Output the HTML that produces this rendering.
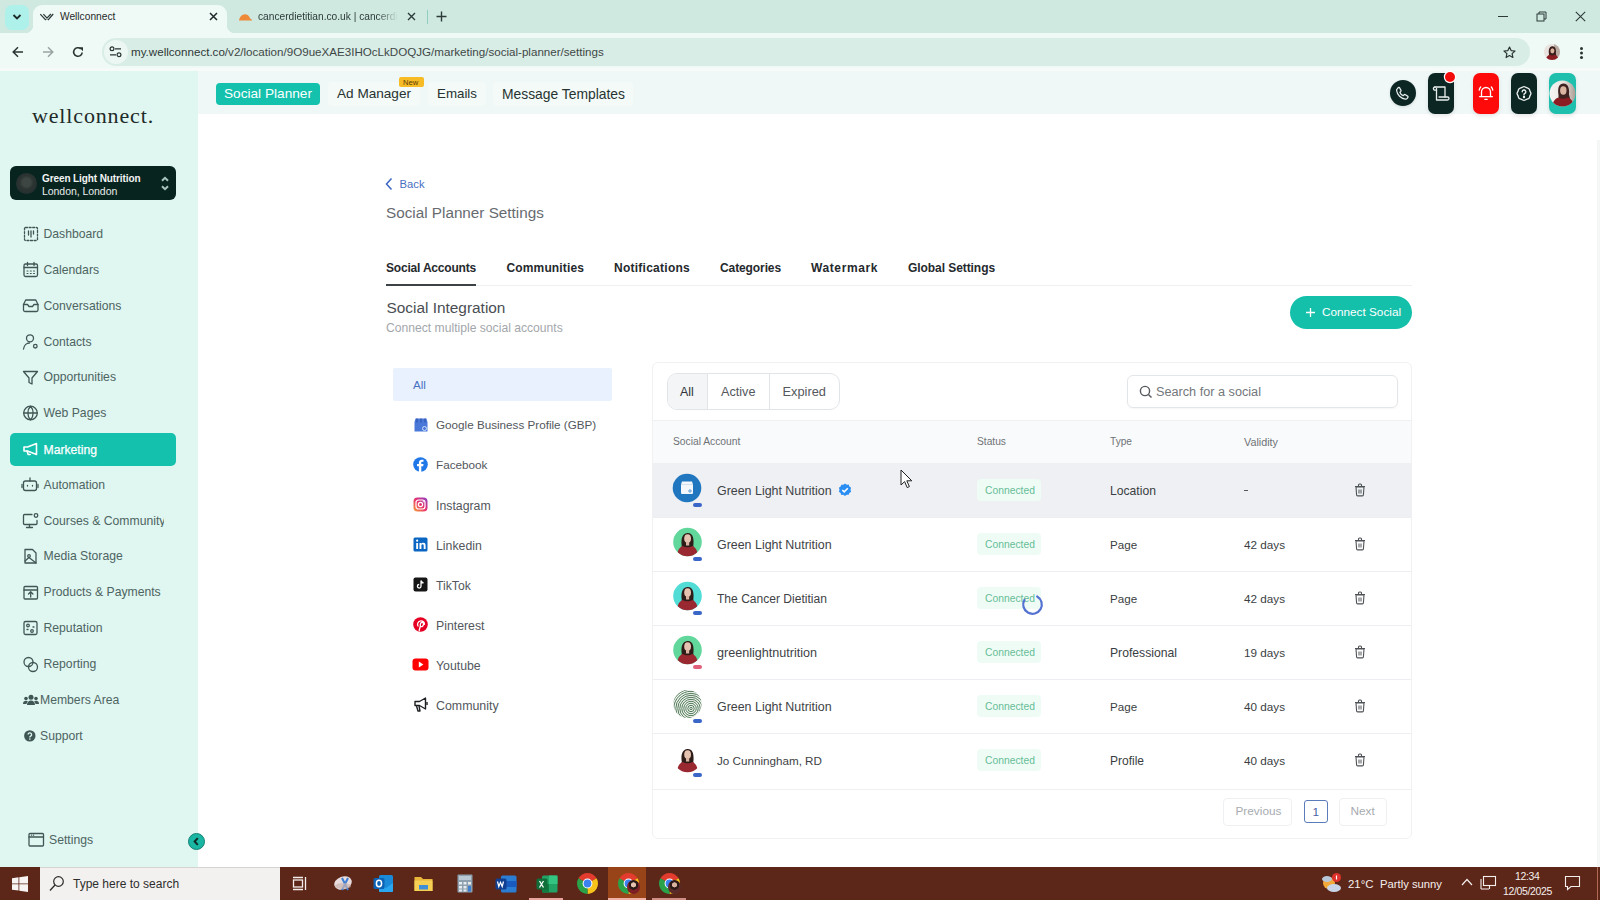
<!DOCTYPE html>
<html><head><meta charset="utf-8">
<style>
*{box-sizing:border-box;margin:0;padding:0}
html,body{width:1600px;height:900px;overflow:hidden;background:#fff;font-family:"Liberation Sans",sans-serif;position:relative}
.a{position:absolute}
.t{position:absolute;white-space:nowrap;line-height:1}
svg{display:block}
</style></head><body>
<!-- ===== browser chrome ===== -->
<div class="a" style="left:0;top:0;width:1600px;height:33px;background:#cfe9e1"></div>
<!-- active tab -->
<div class="a" style="left:33px;top:5px;width:194px;height:30px;border-radius:9px 9px 0 0;background:#eff9f6"></div>
<div class="a" style="left:25px;top:25px;width:8px;height:8px;background:radial-gradient(circle at 0 0,#cfe9e1 8px,#eff9f6 8.5px)"></div>
<div class="a" style="left:227px;top:25px;width:8px;height:8px;background:radial-gradient(circle at 100% 0,#cfe9e1 8px,#eff9f6 8.5px)"></div>
<div class="a" style="left:5px;top:5px;width:24px;height:25px;border-radius:7px;background:#aef0ea"></div>
<svg class="a" style="left:12px;top:13px" width="10" height="8" viewBox="0 0 10 8"><path d="M1.5 2l3.5 3.5L8.5 2" fill="none" stroke="#1d2a2a" stroke-width="1.8"/></svg>
<svg class="a" style="left:40px;top:13px" width="14" height="8" viewBox="0 0 14 8"><path d="M0.3 1.2L5.4 6.6L10.9 1M3.4 1.2L8.4 6.6L13.2 1" fill="none" stroke="#2b3b38" stroke-width="1.25"/></svg>
<div class="t" style="left:60px;top:12px;font-size:10.2px;color:#1f2a28">Wellconnect</div>
<svg class="a" style="left:209px;top:12px" width="9" height="9" viewBox="0 0 9 9"><path d="M1 1l7 7M8 1L1 8" stroke="#1f2a28" stroke-width="1.5"/></svg>
<!-- second tab -->
<svg class="a" style="left:238px;top:13px" width="15" height="8" viewBox="0 0 15 8"><path d="M1 7.5C1.5 4 4 1 7.5 1.2C10 1.4 11.5 3.5 12 5.5C13 5.5 14 6.5 14 7.5Z" fill="#ee8a3a"/></svg>
<div class="t" style="left:258px;top:12px;font-size:10.2px;color:#2d3b38;width:140px;overflow:hidden;-webkit-mask-image:linear-gradient(90deg,#000 85%,transparent)">cancerdietitian.co.uk | cancerdietitian</div>
<svg class="a" style="left:407px;top:12px" width="9" height="9" viewBox="0 0 9 9"><path d="M1 1l7 7M8 1L1 8" stroke="#2d3b38" stroke-width="1.4"/></svg>
<div class="a" style="left:427px;top:10px;width:1px;height:14px;background:#8fcfc2"></div>
<svg class="a" style="left:436px;top:11px" width="11" height="11" viewBox="0 0 11 11"><path d="M5.5 0.5v10M0.5 5.5h10" stroke="#2d3b38" stroke-width="1.4"/></svg>
<!-- window controls -->
<div class="a" style="left:1498px;top:16px;width:10px;height:1px;background:#2d3b38"></div>
<svg class="a" style="left:1536px;top:11px" width="11" height="11" viewBox="0 0 11 11"><rect x="1" y="3" width="7" height="7" fill="none" stroke="#2d3b38" stroke-width="1"/><path d="M3 3V1h7v7H8" fill="none" stroke="#2d3b38" stroke-width="1"/></svg>
<svg class="a" style="left:1575px;top:11px" width="11" height="11" viewBox="0 0 11 11"><path d="M0.8 0.8l9.4 9.4M10.2 0.8L0.8 10.2" stroke="#2d3b38" stroke-width="1.1"/></svg>
<!-- toolbar -->
<div class="a" style="left:0;top:33px;width:1600px;height:38px;background:#eff9f6"></div>
<div class="a" style="left:0;top:67.5px;width:1600px;height:3.5px;background:#f6fbfa"></div>
<svg class="a" style="left:12px;top:46px" width="12" height="12" viewBox="0 0 12 12"><path d="M11 6H1.5M6 1.2L1.2 6L6 10.8" fill="none" stroke="#2a3533" stroke-width="1.5"/></svg>
<svg class="a" style="left:42px;top:46px" width="12" height="12" viewBox="0 0 12 12"><path d="M1 6h9.5M6 1.2L10.8 6L6 10.8" fill="none" stroke="#9aa5a3" stroke-width="1.5"/></svg>
<svg class="a" style="left:72px;top:46px" width="12" height="12" viewBox="0 0 12 12"><path d="M10.2 6.5A4.3 4.3 0 1 1 8.8 2.8" fill="none" stroke="#2a3533" stroke-width="1.6"/><path d="M7 1.2h4v4z" fill="#2a3533"/></svg>
<div class="a" style="left:102px;top:38px;width:1428px;height:28px;border-radius:14px;background:#d9ede7"></div>
<div class="a" style="left:104px;top:40px;width:24px;height:24px;border-radius:12px;background:#ecf7f4"></div>
<svg class="a" style="left:109px;top:46px" width="13" height="12" viewBox="0 0 13 12"><circle cx="3" cy="2.8" r="1.9" fill="none" stroke="#2a3533" stroke-width="1.2"/><path d="M6 2.8h6M1 8.8h6" stroke="#2a3533" stroke-width="1.3"/><circle cx="10" cy="8.8" r="1.9" fill="none" stroke="#2a3533" stroke-width="1.2"/></svg>
<div class="t" style="left:131px;top:46px;font-size:11.6px;color:#2e3836">my.wellconnect.co<span style="color:#3e4846">/v2/location/9O9ueXAE3IHOcLkDOQJG/marketing/social-planner/settings</span></div>
<svg class="a" style="left:1503px;top:46px" width="13" height="13" viewBox="0 0 13 13"><path d="M6.5 1L8.1 4.6L12 5L9.1 7.6L9.9 11.5L6.5 9.5L3.1 11.5L3.9 7.6L1 5L4.9 4.6Z" fill="none" stroke="#2a3533" stroke-width="1.2" stroke-linejoin="round"/></svg>
<svg class="a" style="left:1544px;top:44px" width="16" height="16" viewBox="0 0 16 16"><defs><clipPath id="pav"><circle cx="8" cy="8" r="8"/></clipPath></defs><g clip-path="url(#pav)"><rect width="16" height="16" fill="#e9e2de"/><rect x="10" width="6" height="16" fill="#b9aaa2"/><path d="M5 10c-.6-3.5-.2-7.5 3.3-7.8c3.5-.2 4 3.8 3.6 7.8l.8 3h-8z" fill="#3a1f1c"/><ellipse cx="8.4" cy="6.8" rx="2" ry="2.6" fill="#dab39f"/><path d="M1.5 17c.3-3.5 2-5.5 4-6.2c.9.5 1.6.7 2.7.7s1.8-.2 2.7-.7c2 .7 3.7 2.7 4 6.2z" fill="#8a1c22"/></g></svg>
<div class="a" style="left:1580px;top:47px;width:3px;height:3px;border-radius:50%;background:#2a3533;box-shadow:0 4.5px 0 #2a3533,0 9px 0 #2a3533"></div>

<!-- ===== sidebar ===== -->
<div class="a" style="left:0;top:71px;width:198px;height:796px;background:#e0f6f1"></div>
<div class="t" style="left:32px;top:105.3px;font-family:'Liberation Serif',serif;font-size:22px;letter-spacing:0.85px;color:#1f2b28">wellconnect.</div>
<div class="a" style="left:10px;top:166px;width:166px;height:34px;border-radius:6px;background:#07241f"></div>
<div class="a" style="left:16px;top:173px;width:21px;height:21px;border-radius:50%;background:radial-gradient(circle at 50% 45%,#3e4644 0 4px,#2c3432 7px,#263030 10.5px)"></div>
<div class="t" style="left:42px;top:174px;font-size:10px;font-weight:bold;color:#f2f5f4;letter-spacing:-0.1px">Green Light Nutrition</div>
<div class="t" style="left:42px;top:185.6px;font-size:10.5px;color:#e8eceb;letter-spacing:-0.05px">London, London</div>
<svg class="a" style="left:160px;top:175px" width="10" height="16" viewBox="0 0 10 16"><path d="M2 5.8L5 2.8L8 5.8M2 11.2L5 14.2L8 11.2" fill="none" stroke="#aac4c0" stroke-width="2"/></svg>
<!-- nav -->
<div class="a" style="left:10px;top:433px;width:166px;height:33px;border-radius:5px;background:#13c1ad"></div>
<div id="nav" style="color:#4d6461;font-size:12.2px">
<div class="t" style="left:43.5px;top:228px">Dashboard</div>
<div class="t" style="left:43.5px;top:264px">Calendars</div>
<div class="t" style="left:43.5px;top:300px">Conversations</div>
<div class="t" style="left:43.5px;top:336px">Contacts</div>
<div class="t" style="left:43.5px;top:371px">Opportunities</div>
<div class="t" style="left:43.5px;top:407px">Web Pages</div>
<div class="t" style="left:43.5px;top:443.6px;color:#fff;-webkit-text-stroke:0.25px #fff">Marketing</div>
<div class="t" style="left:43.5px;top:479px">Automation</div>
<div class="t" style="left:43.5px;top:515px;width:120px;overflow:hidden">Courses &amp; Community</div>
<div class="t" style="left:43.5px;top:550px">Media Storage</div>
<div class="t" style="left:43.5px;top:586px">Products &amp; Payments</div>
<div class="t" style="left:43.5px;top:622px">Reputation</div>
<div class="t" style="left:43.5px;top:658px">Reporting</div>
<div class="t" style="left:40px;top:694px">Members Area</div>
<div class="t" style="left:40px;top:730px">Support</div>
<div class="t" style="left:49px;top:834px">Settings</div>
</div>
<svg class="a" style="left:0;top:0" width="198" height="867" viewBox="0 0 198 867" fill="none" stroke="#3f5754" stroke-width="1.3" stroke-linecap="round" stroke-linejoin="round">
 <!-- dashboard dashed square -->
 <rect x="24.5" y="227.5" width="13" height="13" rx="1" stroke-dasharray="2 1.6"/>
 <path d="M28.5 231v4M31 231v6M33.5 231v3"/>
 <!-- calendar -->
 <rect x="24" y="264" width="13.5" height="12.5" rx="1.5"/><path d="M24 267.5h13.5M27.5 262.5v3M34 262.5v3"/>
 <path d="M27 271h1M30.3 271h1M33.5 271h1M27 273.5h1M30.3 273.5h1M33.5 273.5h1" stroke-width="1.1"/>
 <!-- conversations inbox -->
 <path d="M23.5 304.5l2.2-4.5h10.1l2.2 4.5v5.5a1.5 1.5 0 0 1-1.5 1.5H25a1.5 1.5 0 0 1-1.5-1.5z"/><path d="M23.5 304.5h4l1.5 2h3.5l1.5-2h4"/>
 <!-- contacts -->
 <circle cx="30" cy="338.3" r="3.5"/><path d="M23.5 349c0.5-3.5 3-6 6-6"/><circle cx="35.3" cy="346.2" r="1.8"/>
 <!-- opportunities funnel -->
 <path d="M23.5 371.5h14l-5.5 6.5v6l-3 -1.5v-4.5z"/>
 <!-- web pages globe -->
 <circle cx="30.5" cy="413" r="6.8"/><path d="M23.7 413h13.6M30.5 406.2c-3.5 3.5-3.5 10 0 13.6M30.5 406.2c3.5 3.5 3.5 10 0 13.6"/>
 <!-- marketing megaphone -->
 <path d="M24 447v4h3.5l9 3.5v-11l-9 3.5z" stroke="#fff" stroke-width="1.6"/><path d="M27 451l1.2 3.5h2" stroke="#fff" stroke-width="1.6"/>
 <!-- automation robot -->
 <rect x="23.5" y="481" width="13" height="9.5" rx="2"/><path d="M30 478v3M27.5 485.5v0.5M32.5 485.5v0.5M22 484.5v3M38 484.5v3"/>
 <!-- courses monitor -->
 <path d="M32 514.5h-7.5a1 1 0 0 0-1 1v8a1 1 0 0 0 1 1h11.5a1 1 0 0 0 1-1v-3"/><path d="M29.5 524.5v3M26.5 527.5h6"/><circle cx="36" cy="515.5" r="1.8"/>
 <!-- media storage -->
 <path d="M25 549.5h7.5l3.5 3.5v10h-11z"/><circle cx="29" cy="556" r="1.3"/><path d="M25 561l4-3.5l7 5.5"/>
 <!-- products -->
 <rect x="24" y="586.5" width="13.5" height="12.5" rx="1"/><path d="M24 590h13.5M30.7 597v-5M28.5 594l2.2-2.2l2.2 2.2"/>
 <!-- reputation -->
 <rect x="24" y="621.5" width="13" height="13" rx="1.5"/><circle cx="28" cy="625.5" r="1.3"/><circle cx="32" cy="631" r="1.3"/><path d="M27 629.5h1M33 627h1"/>
 <!-- reporting -->
 <circle cx="28.5" cy="662" r="4.5"/><circle cx="33" cy="667" r="4.5"/>
 <!-- settings bottom -->
 <rect x="29" y="833.5" width="14.5" height="12.5" rx="1"/><path d="M29 837h14.5M31.5 835.2h0.1M33.5 835.2h0.1"/>
</svg>
<!-- members area (filled people) -->
<svg class="a" style="left:23px;top:694px" width="16" height="12" viewBox="0 0 16 12"><circle cx="8" cy="3.2" r="2.5" fill="#3f5754"/><path d="M4 11c0-2.8 1.8-4.5 4-4.5s4 1.7 4 4.5z" fill="#3f5754"/><circle cx="3" cy="4.5" r="1.8" fill="#3f5754"/><circle cx="13" cy="4.5" r="1.8" fill="#3f5754"/><path d="M0 10c0-2 1.2-3.2 3-3.2c0.8 0 1.4.2 1.9.6c-.9.9-1.3 1.6-1.4 2.6z M16 10c0-2-1.2-3.2-3-3.2c-.8 0-1.4.2-1.9.6c.9.9 1.3 1.6 1.4 2.6z" fill="#3f5754"/></svg>
<svg class="a" style="left:23.5px;top:729.5px" width="12" height="12" viewBox="0 0 12 12"><circle cx="5.8" cy="5.9" r="5.7" fill="#3f5754"/><path d="M4.1 4.6a1.75 1.75 0 1 1 2.6 1.5c-.55.3-.85.6-.85 1.2v.3" fill="none" stroke="#e0f6f1" stroke-width="1.35"/><circle cx="5.85" cy="9.1" r=".8" fill="#e0f6f1"/></svg>
<!-- collapse button -->
<div class="a" style="left:188px;top:833px;width:17px;height:17px;border-radius:50%;background:#19b6a3;border:1px solid #127f72"></div>
<svg class="a" style="left:192px;top:837px" width="9" height="9" viewBox="0 0 9 9"><path d="M5.8 1.2L2.6 4.5l3.2 3.3" fill="none" stroke="#0e2624" stroke-width="1.9"/></svg>

<!-- ===== app header ===== -->
<div class="a" style="left:198px;top:71px;width:1402px;height:43px;background:#eff8f6"></div>
<div class="a" style="left:216px;top:83px;width:104px;height:22px;border-radius:4px;background:#13c1ad"></div>
<div class="t" style="left:224px;top:87px;font-size:13.65px;color:#fff">Social Planner</div>
<div class="a" style="left:328px;top:82px;width:92px;height:24px;border-radius:4px;background:#f3faf8"></div>
<div class="a" style="left:428px;top:82px;width:58px;height:24px;border-radius:4px;background:#f3faf8"></div>
<div class="a" style="left:493px;top:82px;width:140px;height:24px;border-radius:4px;background:#f3faf8"></div>
<div class="t" style="left:337px;top:87px;font-size:13.58px;color:#273331">Ad Manager</div>
<div class="a" style="left:399px;top:77px;width:25px;height:10px;border-radius:2px;background:#f7bb26"></div>
<div class="t" style="left:403px;top:78.5px;font-size:7.6px;color:#5a3d05">New</div>
<div class="t" style="left:437px;top:87px;font-size:13.33px;color:#273331">Emails</div>
<div class="t" style="left:502px;top:88px;font-size:13.86px;color:#273331">Message Templates</div>
<!-- right icons -->
<div class="a" style="left:1389.5px;top:80px;width:26px;height:26px;border-radius:50%;background:#0c2624;box-shadow:0 1px 3px rgba(0,0,0,.12)"></div>
<svg class="a" style="left:1395px;top:86px" width="15" height="15" viewBox="0 0 15 15"><path d="M3.3 1.6c.5-.3 1-.2 1.3.3l1.3 2.2c.3.5.2 1-.2 1.4l-.8.7c.5 1.5 1.8 2.9 3.3 3.5l.8-.8c.4-.4.9-.5 1.4-.2l2.2 1.4c.5.3.6.9.3 1.3l-.7 1c-.4.6-1.1.9-1.8.8C5.9 12.6 2.2 8.9 1.6 4.5c-.1-.7.2-1.4.8-1.8z" fill="none" stroke="#e6edec" stroke-width="1.25" stroke-linejoin="round"/></svg>
<div class="a" style="left:1428px;top:73px;width:26px;height:41px;border-radius:7px;background:#0c2624;box-shadow:0 2px 4px rgba(0,0,0,.10)"></div>
<svg class="a" style="left:1431px;top:85px" width="20" height="18" viewBox="0 0 20 18" fill="none" stroke="#e8eeed" stroke-width="1.3" stroke-linejoin="round" stroke-linecap="round"><path d="M4 2h10v10"/><path d="M4 2a1.6 1.6 0 0 0-1.6 1.6c0 .9.7 1.6 1.6 1.6h1.5"/><path d="M5.5 3.5V15h11a1.5 1.5 0 0 0 0-3H8"/></svg>
<div class="a" style="left:1444.5px;top:71.8px;width:10.5px;height:10.5px;border-radius:50%;background:#f20c0c;box-shadow:0 0 0 1.2px #fff"></div>
<div class="a" style="left:1473px;top:73px;width:26px;height:41px;border-radius:7px;background:#fe0a0a;box-shadow:0 2px 4px rgba(0,0,0,.10)"></div>
<svg class="a" style="left:1477px;top:84px" width="18" height="18" viewBox="0 0 18 18" fill="none" stroke="#fff" stroke-width="1.3" stroke-linecap="round" stroke-linejoin="round"><path d="M4.5 12.5V8a4.5 4.5 0 0 1 9 0v4.5"/><path d="M2.6 12.6h12.8"/><path d="M7.8 15.3h2.4"/><path d="M2.2 6.2c.2-1.3.7-2.4 1.5-3.2M15.8 6.2c-.2-1.3-.7-2.4-1.5-3.2"/></svg>
<div class="a" style="left:1511px;top:73px;width:26px;height:41px;border-radius:7px;background:#0c2624;box-shadow:0 2px 4px rgba(0,0,0,.10)"></div>
<svg class="a" style="left:1515px;top:85px" width="18" height="17" viewBox="0 0 18 17" fill="none" stroke="#eef3f2" stroke-width="1.3" stroke-linejoin="round"><path d="M7.79 1.94Q9.00 1.20 10.21 1.94Q11.41 2.68 12.79 3.01Q14.16 3.34 14.49 4.71Q14.82 6.09 15.56 7.29Q16.30 8.50 15.56 9.71Q14.82 10.91 14.49 12.29Q14.16 13.66 12.79 13.99Q11.41 14.32 10.21 15.06Q9.00 15.80 7.79 15.06Q6.59 14.32 5.21 13.99Q3.84 13.66 3.51 12.29Q3.18 10.91 2.44 9.71Q1.70 8.50 2.44 7.29Q3.18 6.09 3.51 4.71Q3.84 3.34 5.21 3.01Q6.59 2.68 7.79 1.94z"/><path d="M7.2 6.8a1.8 1.8 0 1 1 2.6 1.6c-.5.3-.8.6-.8 1.2v.3" stroke-linecap="round"/><circle cx="9" cy="12" r=".55" fill="#eef3f2"/></svg>
<div class="a" style="left:1549px;top:73px;width:27px;height:41px;border-radius:7px;background:#1fbfae;box-shadow:0 2px 4px rgba(0,0,0,.10)"></div>
<svg class="a" style="left:1549px;top:80px" width="27" height="27" viewBox="0 0 27 27"><defs><clipPath id="hav"><circle cx="13.5" cy="13.5" r="13"/></clipPath><linearGradient id="hbg" x1="0" x2="1"><stop offset="0" stop-color="#f7f6f5"/><stop offset=".55" stop-color="#ebe4e0"/><stop offset="1" stop-color="#a89890"/></linearGradient></defs><g clip-path="url(#hav)"><rect width="27" height="27" fill="url(#hbg)"/><path d="M9.5 15c-.8-5-.5-11 4.5-11.5c5.5-.3 6.5 5.5 6 11l1.5 6h-12z" fill="#3e2320"/><ellipse cx="14.3" cy="10.5" rx="3.2" ry="4.2" fill="#dcb5a2"/><path d="M3 28c.5-6 3-9.5 6.5-10.5c1.6.8 2.8 1.2 4.6 1.2s3-.4 4.6-1.2c3.5 1 6 4.5 6.3 10.5z" fill="#8a1c22"/></g></svg>

<!-- ===== main content ===== -->
<svg class="a" style="left:384px;top:177px" width="10" height="14" viewBox="0 0 10 14"><path d="M7.5 1.5L2.5 7l5 5.5" fill="none" stroke="#3c66c4" stroke-width="1.5"/></svg>
<div class="t" style="left:399.5px;top:179px;font-size:11.25px;color:#4870c2">Back</div>
<div class="t" style="left:386px;top:205px;font-size:15.28px;color:#676b6f">Social Planner Settings</div>
<!-- tabs -->
<div class="a" style="left:386px;top:285px;width:1026px;height:1px;background:#eef0f2"></div>
<div class="a" style="left:386px;top:284px;width:90px;height:2px;background:#3d4246"></div>
<div style="font-weight:bold;color:#25292d">
<div class="t" style="left:386px;top:261.9px;font-size:12.0px;letter-spacing:-0.194px">Social Accounts</div>
<div class="t" style="left:506.5px;top:261.9px;font-size:12.0px;letter-spacing:0.136px">Communities</div>
<div class="t" style="left:614px;top:261.9px;font-size:12.0px;letter-spacing:0.256px">Notifications</div>
<div class="t" style="left:720px;top:261.9px;font-size:12.0px;letter-spacing:-0.102px">Categories</div>
<div class="t" style="left:811px;top:261.9px;font-size:12.0px;letter-spacing:0.602px">Watermark</div>
<div class="t" style="left:908px;top:261.9px;font-size:12.0px;letter-spacing:-0.067px">Global Settings</div>
</div>
<div class="t" style="left:386.5px;top:300px;font-size:15.4px;color:#4a4e53">Social Integration</div>
<div class="t" style="left:386px;top:322px;font-size:12.15px;color:#a3a7ab">Connect multiple social accounts</div>
<!-- connect button -->
<div class="a" style="left:1290px;top:296px;width:122px;height:33px;border-radius:16.5px;background:#15c0ab"></div>
<svg class="a" style="left:1305px;top:307px" width="11" height="11" viewBox="0 0 11 11"><path d="M5.5 1v9M1 5.5h9" stroke="#fff" stroke-width="1.3"/></svg>
<div class="t" style="left:1322px;top:306px;font-size:11.75px;color:#fff">Connect Social</div>
<!-- left filter list -->
<div class="a" style="left:393px;top:368px;width:219px;height:33px;border-radius:2px;background:#e8f1fd"></div>
<div class="t" style="left:413px;top:379px;font-size:11.6px;color:#4a72c4">All</div>
<div style="color:#53575c;font-size:11.9px">
<div class="t" style="left:436px;top:419px;font-size:11.68px">Google Business Profile (GBP)</div>
<div class="t" style="left:436px;top:459px;font-size:11.73px">Facebook</div>
<div class="t" style="left:436px;top:500px;font-size:12.3px">Instagram</div>
<div class="t" style="left:436px;top:540px;font-size:12.3px">Linkedin</div>
<div class="t" style="left:436px;top:580px;font-size:12.2px">TikTok</div>
<div class="t" style="left:436px;top:620px;font-size:12.3px">Pinterest</div>
<div class="t" style="left:436px;top:660px;font-size:12.3px">Youtube</div>
<div class="t" style="left:436px;top:700px;font-size:12.4px">Community</div>
</div>
<!-- filter icons -->
<svg class="a" style="left:413px;top:418px" width="16" height="14" viewBox="0 0 16 14"><path d="M1.5 4L2.5 0.5h11L14.5 4v9.5h-13z" fill="#4a78d8"/><path d="M4 0.5v4M8 0.5v4M12 0.5v4" stroke="#2d55b0" stroke-width="1.2"/><circle cx="11.5" cy="10.5" r="2" fill="none" stroke="#cfe0ff" stroke-width="1"/></svg>
<svg class="a" style="left:413px;top:457px" width="15" height="15" viewBox="0 0 15 15"><circle cx="7.5" cy="7.5" r="7.3" fill="#1f77e8"/><path d="M8.3 15V9.3h1.9l.3-2.2H8.3V5.8c0-.6.2-1 1-1h1.2V2.8c-.2 0-.9-.1-1.7-.1c-1.7 0-2.9 1-2.9 2.9v1.5H4v2.2h1.9V15z" fill="#fff"/></svg>
<svg class="a" style="left:413px;top:497px" width="15" height="15" viewBox="0 0 15 15"><defs><linearGradient id="ig" x1="0" y1="1" x2="1" y2="0"><stop offset="0" stop-color="#f9a23a"/><stop offset=".5" stop-color="#e8336e"/><stop offset="1" stop-color="#8a3ec8"/></linearGradient></defs><rect x="0.5" y="0.5" width="14" height="14" rx="4" fill="url(#ig)"/><rect x="3" y="3" width="9" height="9" rx="2.6" fill="none" stroke="#fff" stroke-width="1.2"/><circle cx="7.5" cy="7.5" r="2.1" fill="none" stroke="#fff" stroke-width="1.2"/><circle cx="10.3" cy="4.7" r=".6" fill="#fff"/></svg>
<svg class="a" style="left:413px;top:537px" width="15" height="15" viewBox="0 0 15 15"><rect x="0.5" y="0.5" width="14" height="14" rx="1.5" fill="#0a66c2"/><path d="M3.2 6h1.9v6H3.2zM4.15 2.6a1.1 1.1 0 1 1 0 2.2a1.1 1.1 0 0 1 0-2.2zM6.5 6h1.8v.8c.3-.5 1-1 2-1c1.9 0 2.3 1.2 2.3 2.8V12h-1.9V9c0-.8 0-1.7-1.1-1.7S8.4 8.1 8.4 9v3H6.5z" fill="#fff"/></svg>
<svg class="a" style="left:413px;top:577px" width="15" height="15" viewBox="0 0 15 15"><rect x="0.5" y="0.5" width="14" height="14" rx="2" fill="#161616"/><path d="M8 3.5v5.8a1.8 1.8 0 1 1-1.8-1.8M8 3.5c.3 1.3 1.3 2.2 2.6 2.3" fill="none" stroke="#fff" stroke-width="1.3"/></svg>
<svg class="a" style="left:413px;top:617px" width="15" height="15" viewBox="0 0 15 15"><circle cx="7.5" cy="7.5" r="7.3" fill="#e60023"/><path d="M6.2 13.5l1.2-4.8M7.4 8.7c-.5-1.8.5-3.6 2-3.4c1.4.2 1.2 2.4.5 3.5c-.6 1-1.8 1.1-2.4.4M5 9c-1-1.5-.3-5 2.8-5.2c2.6-.1 3.8 1.7 3.6 3.5" fill="none" stroke="#fff" stroke-width="1.3" stroke-linecap="round"/></svg>
<svg class="a" style="left:412px;top:658px" width="17" height="13" viewBox="0 0 17 13"><rect x="0.5" y="0.5" width="16" height="12" rx="3" fill="#f00"/><path d="M6.8 3.6v5.8l4.6-2.9z" fill="#fff"/></svg>
<svg class="a" style="left:413px;top:697px" width="16" height="15" viewBox="0 0 16 15" fill="none" stroke="#1d1f22" stroke-width="1.4" stroke-linejoin="round"><path d="M2 4.5h4.5l6-3.5v11l-6-3.5H2z"/><path d="M3.5 9l1.5 5h2l-1-5M14 5v3"/></svg>
<!-- card -->
<div class="a" style="left:652px;top:362px;width:760px;height:477px;border:1px solid #eff1f3;border-radius:6px;background:#fff"></div>
<!-- segmented -->
<div class="a" style="left:667px;top:373px;width:173px;height:37px;border:1px solid #e2e5e8;border-radius:10px;overflow:hidden">
 <div class="a" style="left:0;top:0;width:40px;height:35px;background:#f3f5f7;border-right:1px solid #e2e5e8"></div>
 <div class="a" style="left:101px;top:0;width:1px;height:35px;background:#e2e5e8"></div>
</div>
<div class="t" style="left:680px;top:385.5px;font-size:12.42px;color:#2f3337">All</div>
<div class="t" style="left:721px;top:385.5px;font-size:12.67px;color:#54585d">Active</div>
<div class="t" style="left:782.5px;top:385.5px;font-size:12.8px;color:#54585d">Expired</div>
<!-- search -->
<div class="a" style="left:1127px;top:375px;width:271px;height:33px;border:1px solid #e3e6e9;border-radius:6px;box-shadow:0 1px 2px rgba(0,0,0,.04)"></div>
<svg class="a" style="left:1139px;top:385px" width="14" height="14" viewBox="0 0 14 14"><circle cx="6" cy="6" r="4.6" fill="none" stroke="#55595d" stroke-width="1.4"/><path d="M9.4 9.4L12.5 12.5" stroke="#55595d" stroke-width="1.4"/></svg>
<div class="t" style="left:1156px;top:386px;font-size:12.68px;color:#73777b">Search for a social</div>
<!-- table header -->
<div class="a" style="left:653px;top:420px;width:758px;height:1px;background:#eef0f2"></div>
<div class="a" style="left:653px;top:421px;width:758px;height:42px;background:#f9fafb"></div>
<div style="color:#6e7277">
<div class="t" style="left:673px;top:437px;font-size:10.28px">Social Account</div>
<div class="t" style="left:977px;top:437px;font-size:10.23px">Status</div>
<div class="t" style="left:1110px;top:437px;font-size:10.15px">Type</div>
<div class="t" style="left:1244px;top:437px;font-size:10.8px">Validity</div>
</div>
<div class="a" style="left:1597px;top:140px;width:3px;height:727px;background:#f5f6f6"></div>

<!-- ===== table rows ===== -->
<div class="a" style="left:653px;top:463px;width:758px;height:54px;background:#eef0f3"></div>
<svg class="a" style="left:672px;top:473px" width="30" height="30" viewBox="0 0 30 30"><circle cx="15" cy="15" r="14.3" fill="#2176c0"/><path d="M9 11.5l1-3h10l1 3v8.5a1 1 0 0 1-1 1H10a1 1 0 0 1-1-1z" fill="#f4f7fb"/><path d="M9 11.5h12" stroke="#c9d8ea" stroke-width=".8"/><circle cx="18" cy="18" r="1.2" fill="none" stroke="#2176c0" stroke-width=".7"/></svg>
<div class="a" style="left:693px;top:503px;width:9px;height:4px;border-radius:2px;background:#3a66c8"></div>
<div class="t" style="left:717px;top:484.8px;font-size:12.43px;color:#3e4246">Green Light Nutrition</div>
<svg class="a" style="left:838px;top:483px" width="14" height="14" viewBox="0 0 14 14"><path d="M7 .5l1.7 1.2l2-.1l.7 1.9l1.7 1.2l-.6 2l.6 2l-1.7 1.2l-.7 1.9l-2-.1L7 13l-1.7-1.2l-2 .1l-.7-1.9L.9 8.8l.6-2l-.6-2l1.7-1.2l.7-1.9l2 .1z" fill="#2b8ef2"/><path d="M4.3 7l1.9 1.9l3.6-3.6" fill="none" stroke="#fff" stroke-width="1.5"/></svg>
<div class="a" style="left:977px;top:479px;width:64px;height:22px;border-radius:4px;background:#effcf5"></div>
<div class="t" style="left:985px;top:485.5px;font-size:10.34px;color:#66bd98">Connected</div>
<div class="t" style="left:1110px;top:484.8px;font-size:12.17px;color:#3a3e42">Location</div>
<div class="a" style="left:1244px;top:490px;width:4px;height:1.2px;background:#55595e"></div>
<svg class="a" style="left:1353px;top:483px" width="14" height="14" viewBox="0 0 14 14" fill="none" stroke="#4e5256" stroke-width="1.1"><path d="M3 4h8l-.6 8a1 1 0 0 1-1 .9H4.6a1 1 0 0 1-1-.9z"/><path d="M2 3.5h10M5.5 3.3V2a1 1 0 0 1 1-1h1a1 1 0 0 1 1 1v1.3" /><path d="M6 6.5v4M8 6.5v4" stroke-width="1"/></svg>
<div class="a" style="left:653px;top:517px;width:758px;height:1px;background:#eceef1"></div>
<svg class="a" style="left:672px;top:527px" width="30" height="30" viewBox="0 0 30 30"><defs><clipPath id="c1"><circle cx="15.5" cy="15" r="14.3"/></clipPath></defs><circle cx="15.5" cy="15" r="14.3" fill="#62d79c"/><g clip-path="url(#c1)"><path d="M9.8 19c-.8-5-.6-12.5 5.7-13c6-.3 6.6 7 5.8 13l1.2 3h-13.8z" fill="#2e1c19"/><ellipse cx="15.6" cy="11.6" rx="3.4" ry="4.3" fill="#e6c2b0"/><path d="M14 15h3.2v3.5h-3.2z" fill="#dcb3a0"/><path d="M5 31c0-6.5 2-10.5 5.5-12c1.8.9 3.2 1.3 5 1.3s3.3-.4 5-1.3c3.5 1.5 5.5 5.5 5.5 12z" fill="#9a2830"/></g></svg>
<div class="a" style="left:693px;top:557px;width:9px;height:4px;border-radius:2px;background:#3a66c8"></div>
<div class="t" style="left:717px;top:538.8px;font-size:12.43px;color:#3e4246">Green Light Nutrition</div>
<div class="a" style="left:977px;top:533px;width:64px;height:22px;border-radius:4px;background:#effcf5"></div>
<div class="t" style="left:985px;top:539.5px;font-size:10.34px;color:#66bd98">Connected</div>
<div class="t" style="left:1110px;top:538.8px;font-size:11.6px;color:#3a3e42">Page</div>
<div class="t" style="left:1244px;top:538.8px;font-size:11.71px;color:#3a3e42">42 days</div>
<svg class="a" style="left:1353px;top:537px" width="14" height="14" viewBox="0 0 14 14" fill="none" stroke="#4e5256" stroke-width="1.1"><path d="M3 4h8l-.6 8a1 1 0 0 1-1 .9H4.6a1 1 0 0 1-1-.9z"/><path d="M2 3.5h10M5.5 3.3V2a1 1 0 0 1 1-1h1a1 1 0 0 1 1 1v1.3" /><path d="M6 6.5v4M8 6.5v4" stroke-width="1"/></svg>
<div class="a" style="left:653px;top:571px;width:758px;height:1px;background:#eceef1"></div>
<svg class="a" style="left:672px;top:581px" width="30" height="30" viewBox="0 0 30 30"><defs><clipPath id="c2"><circle cx="15.5" cy="15" r="14.3"/></clipPath></defs><circle cx="15.5" cy="15" r="14.3" fill="#52dcd6"/><g clip-path="url(#c2)"><path d="M9.8 19c-.8-5-.6-12.5 5.7-13c6-.3 6.6 7 5.8 13l1.2 3h-13.8z" fill="#2e1c19"/><ellipse cx="15.6" cy="11.6" rx="3.4" ry="4.3" fill="#e6c2b0"/><path d="M14 15h3.2v3.5h-3.2z" fill="#dcb3a0"/><path d="M5 31c0-6.5 2-10.5 5.5-12c1.8.9 3.2 1.3 5 1.3s3.3-.4 5-1.3c3.5 1.5 5.5 5.5 5.5 12z" fill="#9a2830"/></g></svg>
<div class="a" style="left:693px;top:611px;width:9px;height:4px;border-radius:2px;background:#3a66c8"></div>
<div class="t" style="left:717px;top:592.8px;font-size:12.07px;color:#3e4246">The Cancer Dietitian</div>
<div class="a" style="left:977px;top:587px;width:64px;height:22px;border-radius:4px;background:#effcf5"></div>
<div class="t" style="left:985px;top:593.5px;font-size:10.34px;color:#66bd98">Connected</div>
<div class="t" style="left:1110px;top:592.8px;font-size:11.6px;color:#3a3e42">Page</div>
<div class="t" style="left:1244px;top:592.8px;font-size:11.71px;color:#3a3e42">42 days</div>
<svg class="a" style="left:1353px;top:591px" width="14" height="14" viewBox="0 0 14 14" fill="none" stroke="#4e5256" stroke-width="1.1"><path d="M3 4h8l-.6 8a1 1 0 0 1-1 .9H4.6a1 1 0 0 1-1-.9z"/><path d="M2 3.5h10M5.5 3.3V2a1 1 0 0 1 1-1h1a1 1 0 0 1 1 1v1.3" /><path d="M6 6.5v4M8 6.5v4" stroke-width="1"/></svg>
<div class="a" style="left:653px;top:625px;width:758px;height:1px;background:#eceef1"></div>
<svg class="a" style="left:672px;top:635px" width="30" height="30" viewBox="0 0 30 30"><defs><clipPath id="c3"><circle cx="15.5" cy="15" r="14.3"/></clipPath></defs><circle cx="15.5" cy="15" r="14.3" fill="#62d79c"/><g clip-path="url(#c3)"><path d="M9.8 19c-.8-5-.6-12.5 5.7-13c6-.3 6.6 7 5.8 13l1.2 3h-13.8z" fill="#2e1c19"/><ellipse cx="15.6" cy="11.6" rx="3.4" ry="4.3" fill="#e6c2b0"/><path d="M14 15h3.2v3.5h-3.2z" fill="#dcb3a0"/><path d="M5 31c0-6.5 2-10.5 5.5-12c1.8.9 3.2 1.3 5 1.3s3.3-.4 5-1.3c3.5 1.5 5.5 5.5 5.5 12z" fill="#9a2830"/></g></svg>
<div class="a" style="left:693px;top:665px;width:9px;height:4px;border-radius:2px;background:#e0607a"></div>
<div class="t" style="left:717px;top:646.8px;font-size:12.6px;color:#3e4246">greenlightnutrition</div>
<div class="a" style="left:977px;top:641px;width:64px;height:22px;border-radius:4px;background:#effcf5"></div>
<div class="t" style="left:985px;top:647.5px;font-size:10.34px;color:#66bd98">Connected</div>
<div class="t" style="left:1110px;top:646.8px;font-size:12.18px;color:#3a3e42">Professional</div>
<div class="t" style="left:1244px;top:646.8px;font-size:11.71px;color:#3a3e42">19 days</div>
<svg class="a" style="left:1353px;top:645px" width="14" height="14" viewBox="0 0 14 14" fill="none" stroke="#4e5256" stroke-width="1.1"><path d="M3 4h8l-.6 8a1 1 0 0 1-1 .9H4.6a1 1 0 0 1-1-.9z"/><path d="M2 3.5h10M5.5 3.3V2a1 1 0 0 1 1-1h1a1 1 0 0 1 1 1v1.3" /><path d="M6 6.5v4M8 6.5v4" stroke-width="1"/></svg>
<div class="a" style="left:653px;top:679px;width:758px;height:1px;background:#eceef1"></div>
<svg class="a" style="left:672px;top:689px" width="30" height="30" viewBox="0 0 30 30"><defs><clipPath id="fpc"><circle cx="15.5" cy="15" r="14"/></clipPath></defs><g clip-path="url(#fpc)"><rect width="30" height="30" fill="#eef6ef"/><circle cx="19" cy="19.5" r="1.2" fill="none" stroke="#4a7050" stroke-width="0.95"/><circle cx="19" cy="19.5" r="3.2" fill="none" stroke="#4a7050" stroke-width="0.95"/><circle cx="19" cy="19.5" r="5.2" fill="none" stroke="#4a7050" stroke-width="0.95"/><circle cx="19" cy="19.5" r="7.2" fill="none" stroke="#4a7050" stroke-width="0.95"/><circle cx="19" cy="19.5" r="9.2" fill="none" stroke="#4a7050" stroke-width="0.95"/><circle cx="19" cy="19.5" r="11.2" fill="none" stroke="#4a7050" stroke-width="0.95"/><circle cx="19" cy="19.5" r="13.2" fill="none" stroke="#4a7050" stroke-width="0.95"/><circle cx="19" cy="19.5" r="15.2" fill="none" stroke="#4a7050" stroke-width="0.95"/><circle cx="19" cy="19.5" r="17.2" fill="none" stroke="#4a7050" stroke-width="0.95"/><circle cx="19" cy="19.5" r="19.2" fill="none" stroke="#4a7050" stroke-width="0.95"/><circle cx="19" cy="19.5" r="21.2" fill="none" stroke="#4a7050" stroke-width="0.95"/></g></svg>
<div class="a" style="left:693px;top:719px;width:9px;height:4px;border-radius:2px;background:#3a66c8"></div>
<div class="t" style="left:717px;top:700.8px;font-size:12.43px;color:#3e4246">Green Light Nutrition</div>
<div class="a" style="left:977px;top:695px;width:64px;height:22px;border-radius:4px;background:#effcf5"></div>
<div class="t" style="left:985px;top:701.5px;font-size:10.34px;color:#66bd98">Connected</div>
<div class="t" style="left:1110px;top:700.8px;font-size:11.6px;color:#3a3e42">Page</div>
<div class="t" style="left:1244px;top:700.8px;font-size:11.71px;color:#3a3e42">40 days</div>
<svg class="a" style="left:1353px;top:699px" width="14" height="14" viewBox="0 0 14 14" fill="none" stroke="#4e5256" stroke-width="1.1"><path d="M3 4h8l-.6 8a1 1 0 0 1-1 .9H4.6a1 1 0 0 1-1-.9z"/><path d="M2 3.5h10M5.5 3.3V2a1 1 0 0 1 1-1h1a1 1 0 0 1 1 1v1.3" /><path d="M6 6.5v4M8 6.5v4" stroke-width="1"/></svg>
<div class="a" style="left:653px;top:733px;width:758px;height:1px;background:#eceef1"></div>
<svg class="a" style="left:672px;top:743px" width="30" height="30" viewBox="0 0 30 30"><defs><clipPath id="c5"><circle cx="15.5" cy="15" r="14.3"/></clipPath></defs><circle cx="15.5" cy="15" r="14.3" fill="#ffffff"/><g clip-path="url(#c5)"><path d="M9.8 19c-.8-5-.6-12.5 5.7-13c6-.3 6.6 7 5.8 13l1.2 3h-13.8z" fill="#2e1c19"/><ellipse cx="15.6" cy="11.6" rx="3.4" ry="4.3" fill="#e6c2b0"/><path d="M14 15h3.2v3.5h-3.2z" fill="#dcb3a0"/><path d="M5 31c0-6.5 2-10.5 5.5-12c1.8.9 3.2 1.3 5 1.3s3.3-.4 5-1.3c3.5 1.5 5.5 5.5 5.5 12z" fill="#9a2830"/></g></svg>
<div class="a" style="left:693px;top:773px;width:9px;height:4px;border-radius:2px;background:#3a66c8"></div>
<div class="t" style="left:717px;top:754.8px;font-size:11.66px;color:#3e4246">Jo Cunningham, RD</div>
<div class="a" style="left:977px;top:749px;width:64px;height:22px;border-radius:4px;background:#effcf5"></div>
<div class="t" style="left:985px;top:755.5px;font-size:10.34px;color:#66bd98">Connected</div>
<div class="t" style="left:1110px;top:754.8px;font-size:12.0px;color:#3a3e42">Profile</div>
<div class="t" style="left:1244px;top:754.8px;font-size:11.71px;color:#3a3e42">40 days</div>
<svg class="a" style="left:1353px;top:753px" width="14" height="14" viewBox="0 0 14 14" fill="none" stroke="#4e5256" stroke-width="1.1"><path d="M3 4h8l-.6 8a1 1 0 0 1-1 .9H4.6a1 1 0 0 1-1-.9z"/><path d="M2 3.5h10M5.5 3.3V2a1 1 0 0 1 1-1h1a1 1 0 0 1 1 1v1.3" /><path d="M6 6.5v4M8 6.5v4" stroke-width="1"/></svg>
<div class="a" style="left:653px;top:789px;width:758px;height:1px;background:#eef0f2"></div>
<svg class="a" style="left:1020px;top:591.5px" width="25" height="25" viewBox="0 0 25 25"><path d="M17.15 4.45A9.3 9.3 0 1 1 4.45 7.85" fill="none" stroke="#5472d2" stroke-width="2.2" stroke-linecap="round"/></svg>
<div class="a" style="left:1223px;top:798px;width:69px;height:28px;border:1px solid #eef0f2;border-radius:4px"></div>
<div class="t" style="left:1235.5px;top:806px;font-size:11.8px;color:#a7abaf">Previous</div>
<div class="a" style="left:1304px;top:800px;width:24px;height:23px;border:1px solid #5a7cb8;border-radius:3px"></div>
<div class="t" style="left:1312.5px;top:806.5px;font-size:11.8px;color:#4a62a6">1</div>
<div class="a" style="left:1339px;top:798px;width:48px;height:28px;border:1px solid #eef0f2;border-radius:4px"></div>
<div class="t" style="left:1350.5px;top:806px;font-size:11.8px;color:#a7abaf">Next</div>
<svg class="a" style="left:900px;top:469px" width="13" height="20" viewBox="0 0 13 20"><path d="M1 1v15l3.6-3.4l2.6 6l2.2-1l-2.6-5.8h5z" fill="#fff" stroke="#222" stroke-width="1"/></svg>
<!-- ===== taskbar ===== -->
<div class="a" style="left:0;top:867px;width:1600px;height:33px;background:#5c2618"></div>
<svg class="a" style="left:12px;top:876px" width="16" height="16" viewBox="0 0 16 16" fill="#f6f3f2"><path d="M0 2.2l6.5-.9v6.2H0zM7.3 1.2L16 0v7.5H7.3zM0 8.3h6.5v6.3L0 13.7zM7.3 8.3H16V16l-8.7-1.2z"/></svg>
<div class="a" style="left:40px;top:867px;width:240px;height:33px;background:#f3f1ef;border-top:1px solid #d6d4d2"></div>
<svg class="a" style="left:49px;top:875px" width="16" height="17" viewBox="0 0 16 17"><circle cx="9.5" cy="6.5" r="4.8" fill="none" stroke="#2a2a2a" stroke-width="1.2"/><path d="M6 10L1 15.5" stroke="#2a2a2a" stroke-width="1.3"/></svg>
<div class="t" style="left:73px;top:878px;font-size:12px;color:#2d2d2d">Type here to search</div>
<svg class="a" style="left:292px;top:876px" width="16" height="15" viewBox="0 0 16 15" fill="none" stroke="#f3eeec" stroke-width="1.3"><rect x="1.5" y="4" width="9" height="7"/><path d="M1 1.5h10M1 13.5h10M13.5 1v13"/></svg>
<!-- snipping -->
<svg class="a" style="left:333px;top:874px" width="21" height="18" viewBox="0 0 21 18"><ellipse cx="10" cy="9" rx="9" ry="6.5" fill="#e8dcdc" transform="rotate(-20 10 9)"/><path d="M9 4l6 12M15 4L9 16" stroke="#3d7fd6" stroke-width="2"/><ellipse cx="10" cy="12" rx="8" ry="3" fill="#c9b3b0" opacity=".7"/></svg>
<!-- outlook -->
<svg class="a" style="left:373px;top:874px" width="21" height="19" viewBox="0 0 21 19"><rect x="6" y="1" width="14" height="17" rx="1.5" fill="#1a8ad8"/><path d="M6 9l7 5l7-5v8a1 1 0 0 1-1 1H7a1 1 0 0 1-1-1z" fill="#2aa6f0"/><rect x="0.5" y="4" width="11" height="11" rx="1.5" fill="#0c63b6"/><ellipse cx="6" cy="9.5" rx="2.6" ry="3.2" fill="none" stroke="#fff" stroke-width="1.5"/></svg>
<!-- explorer -->
<svg class="a" style="left:414px;top:875px" width="19" height="17" viewBox="0 0 19 17"><path d="M0.5 2h6.5l2 2h9.5v12H0.5z" fill="#e9b53a"/><rect x="0.5" y="5.5" width="18" height="10.5" fill="#f6cf55"/><rect x="5" y="10" width="9" height="4.5" fill="#3f8fd8"/></svg>
<!-- calculator -->
<svg class="a" style="left:457px;top:874px" width="16" height="19" viewBox="0 0 16 19"><rect x="0.5" y="0.5" width="15" height="18" rx="1" fill="#8da0ae"/><rect x="2" y="2" width="12" height="4" fill="#b9c8d2"/><g fill="#e6ecf0"><rect x="2" y="8" width="3" height="2.5"/><rect x="6.5" y="8" width="3" height="2.5"/><rect x="11" y="8" width="3" height="2.5"/><rect x="2" y="12" width="3" height="2.5"/><rect x="6.5" y="12" width="3" height="2.5"/><rect x="2" y="15.5" width="3" height="2"/><rect x="6.5" y="15.5" width="3" height="2"/></g><rect x="11" y="12" width="3" height="5.5" fill="#3f7fd0"/></svg>
<!-- word -->
<svg class="a" style="left:495px;top:875px" width="22" height="18" viewBox="0 0 22 18"><rect x="6" y="0.5" width="15.5" height="17" rx="1.5" fill="#2b7cd3"/><rect x="6" y="6" width="15.5" height="6" fill="#185abd"/><rect x="0.5" y="3.5" width="11" height="11" rx="1.5" fill="#103f91"/><path d="M2.5 6.5l1.3 5l1.7-4.2l1.7 4.2l1.3-5" fill="none" stroke="#fff" stroke-width="1.2"/></svg>
<!-- excel -->
<svg class="a" style="left:536px;top:875px" width="22" height="18" viewBox="0 0 22 18"><rect x="6" y="0.5" width="15.5" height="17" rx="1.5" fill="#21a366"/><rect x="13" y="0.5" width="8.5" height="8.5" fill="#33c481"/><rect x="6" y="9" width="7" height="8.5" fill="#107c41"/><rect x="0.5" y="3.5" width="11" height="11" rx="1.5" fill="#0f6e3a"/><path d="M3.5 6l4 6.5M7.5 6l-4 6.5" stroke="#fff" stroke-width="1.3"/></svg>
<div class="a" style="left:529px;top:898px;width:34px;height:2px;background:#e9a4a0"></div>
<!-- chrome -->
<svg class="a" style="left:577px;top:873px" width="21" height="21" viewBox="0 0 21 21"><path d="M10.5 10.5L1.41 5.25A10.5 10.5 0 0 1 19.59 5.25z" fill="#e33b2e"/><path d="M10.5 10.5L19.59 5.25A10.5 10.5 0 0 1 10.50 21.00z" fill="#f7c21a"/><path d="M10.5 10.5L10.50 21.00A10.5 10.5 0 0 1 1.41 5.25z" fill="#2aa24a"/><circle cx="10.5" cy="10.5" r="4.9" fill="#fff"/><circle cx="10.5" cy="10.5" r="3.9" fill="#3b82f0"/></svg>
<div class="a" style="left:608px;top:867px;width:38px;height:33px;background:#984418"></div>
<div class="a" style="left:608px;top:898px;width:38px;height:2px;background:#f0b0a4"></div>
<svg class="a" style="left:618px;top:873px" width="21" height="21" viewBox="0 0 21 21"><path d="M10.5 10.5L1.41 5.25A10.5 10.5 0 0 1 19.59 5.25z" fill="#e33b2e"/><path d="M10.5 10.5L19.59 5.25A10.5 10.5 0 0 1 10.50 21.00z" fill="#f7c21a"/><path d="M10.5 10.5L10.50 21.00A10.5 10.5 0 0 1 1.41 5.25z" fill="#2aa24a"/><circle cx="10.5" cy="10.5" r="4.9" fill="#fff"/><circle cx="10.5" cy="10.5" r="3.9" fill="#3b82f0"/></svg>
<div class="a" style="left:627px;top:880px;width:13px;height:14px;border-radius:50%;background:radial-gradient(circle at 50% 35%,#e5c2b0 0 2.3px,#2c1a16 2.8px 4.6px,#7c1e24 5px)"></div>
<div class="a" style="left:652px;top:898px;width:34px;height:2px;background:#cf8f86"></div>
<svg class="a" style="left:659px;top:873px" width="21" height="21" viewBox="0 0 21 21"><path d="M10.5 10.5L1.41 5.25A10.5 10.5 0 0 1 19.59 5.25z" fill="#e33b2e"/><path d="M10.5 10.5L19.59 5.25A10.5 10.5 0 0 1 10.50 21.00z" fill="#f7c21a"/><path d="M10.5 10.5L10.50 21.00A10.5 10.5 0 0 1 1.41 5.25z" fill="#2aa24a"/><circle cx="10.5" cy="10.5" r="4.9" fill="#fff"/><circle cx="10.5" cy="10.5" r="3.9" fill="#3b82f0"/></svg>
<div class="a" style="left:668px;top:880px;width:13px;height:14px;border-radius:50%;background:radial-gradient(circle at 50% 35%,#d9b3a0 0 2.3px,#2c1a16 2.8px 4.6px,#5a2a28 5px)"></div>
<!-- tray -->
<svg class="a" style="left:1321px;top:872px" width="22" height="22" viewBox="0 0 22 22"><circle cx="8" cy="11" r="6" fill="#f2a93a"/><ellipse cx="13" cy="16" rx="7" ry="4" fill="#c9d5e6"/><ellipse cx="6" cy="7" rx="5" ry="3" fill="#b8c6da"/><circle cx="15.5" cy="5.5" r="4.5" fill="#e0322c"/><path d="M15.5 3.5v4" stroke="#fff" stroke-width="1.2"/></svg>
<div class="t" style="left:1348px;top:878.5px;font-size:11.4px;color:#f5efed">21°C</div>
<div class="t" style="left:1380px;top:878.5px;font-size:11.27px;color:#f5efed">Partly sunny</div>
<svg class="a" style="left:1461px;top:878px" width="12" height="8" viewBox="0 0 12 8"><path d="M1 7l5-5.5L11 7" fill="none" stroke="#f3eeec" stroke-width="1.2"/></svg>
<svg class="a" style="left:1480px;top:875px" width="17" height="16" viewBox="0 0 17 16" fill="none" stroke="#f3eeec" stroke-width="1.1"><rect x="3.5" y="1.5" width="12" height="9"/><path d="M1 4v10M1 14h8M9.5 10.5v3.5"/></svg>
<div class="t" style="left:1515px;top:871px;font-size:10.5px;letter-spacing:-0.35px;color:#f5efed">12:34</div>
<div class="t" style="left:1503px;top:886px;font-size:10.5px;letter-spacing:-0.35px;color:#f5efed">12/05/2025</div>
<svg class="a" style="left:1564px;top:875px" width="17" height="16" viewBox="0 0 17 16" fill="none" stroke="#f3eeec" stroke-width="1.1"><path d="M1.5 1.5h14v10H7l-3.5 3v-3h-2z"/></svg>
<div class="a" style="left:1597px;top:867px;width:1px;height:33px;background:#b06a55"></div>

</body></html>
